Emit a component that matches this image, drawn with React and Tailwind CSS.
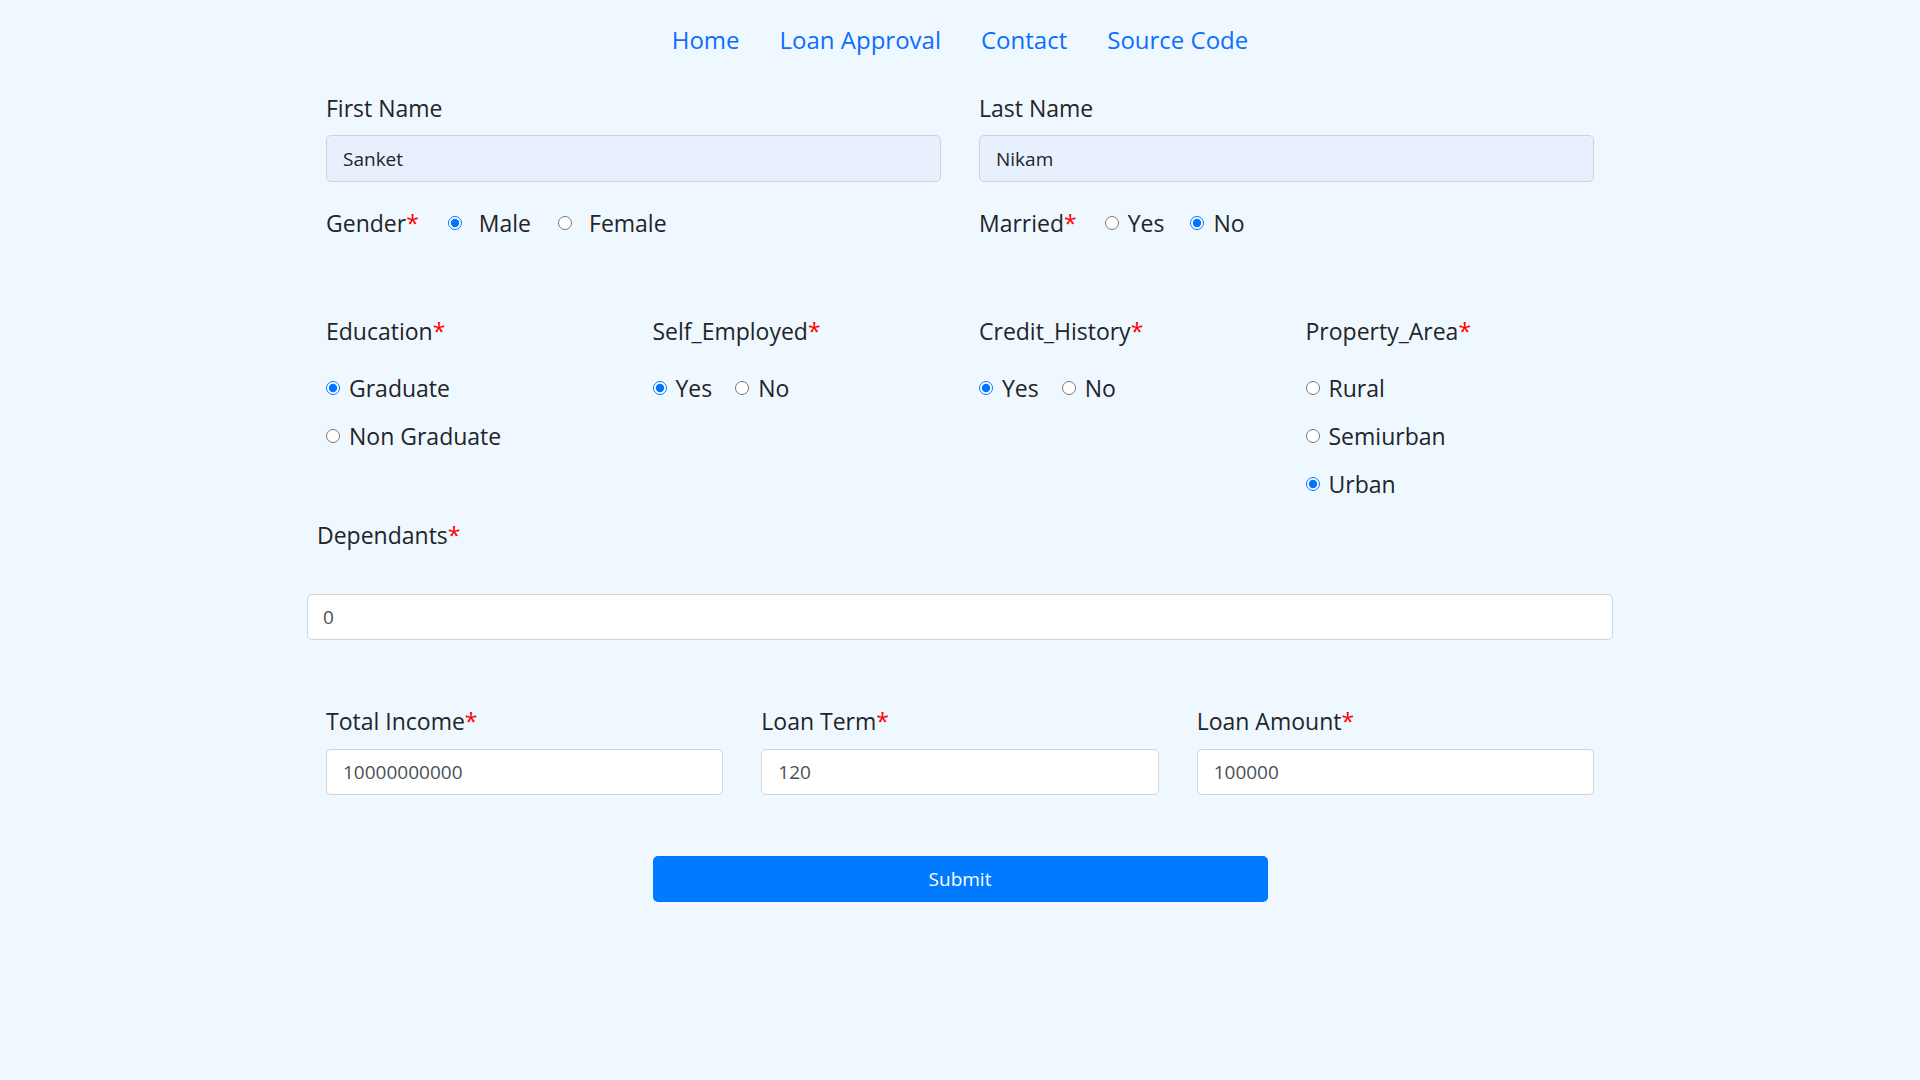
import React from "react";

const Req = () => <span className="text-[#ff0000]">*</span>;

const Radio = ({ name, checked, label, textGap = "ml-[9px]", className = "" }) => (
  <label className={`flex items-center ${className}`}>
    <input
      type="radio"
      name={name}
      defaultChecked={checked}
      className="m-0 h-[14px] w-[14px] shrink-0"
    />
    <span className={textGap}>{label}</span>
  </label>
);

const TextField = ({ label, value, required, autofill = false }) => (
  <div className="px-[19px]">
    <label className="block text-[23px] leading-[36px]">
      {label}
      {required && <Req />}
    </label>
    <input
      defaultValue={value}
      className={`mt-[10px] block h-[46px] w-full rounded-[5px] border border-[#ced4da] px-[16px] text-[19px] outline-none ${
        autofill ? "bg-[#e8f0fe] text-[#212529]" : "bg-white text-[#495057]"
      }`}
    />
  </div>
);

const RadioGroup = ({ title, name, options, inline = false }) => (
  <div className="px-[19px]">
    <div className="text-[23px] leading-[36px]">
      {title}
      <Req />
    </div>
    <div className={`mt-[21px] flex ${inline ? "flex-row" : "flex-col gap-[12px]"} text-[23px] leading-[36px]`}>
      {options.map((o, i) => (
        <Radio
          key={o.label}
          name={name}
          label={o.label}
          checked={o.checked}
          className={inline && i > 0 ? "ml-[23px]" : ""}
        />
      ))}
    </div>
  </div>
);

export default function App() {
  return (
    <div className="min-h-screen bg-[#f0f8ff] font-['Open_Sans',sans-serif] text-[#212529]">
      <nav className="flex h-[80px] items-center justify-center gap-[40px] text-[24px] text-[#0d6efd]">
        <a href="#">Home</a>
        <a href="#">Loan Approval</a>
        <a href="#">Contact</a>
        <a href="#">Source Code</a>
      </nav>

      <form className="mx-auto w-[1306px] pt-[10px]" onSubmit={(e) => e.preventDefault()}>
        <div className="grid grid-cols-2">
          <div className="px-[19px]">
            <label className="block text-[23px] leading-[36px]">First Name</label>
            <input
              defaultValue="Sanket"
              className="mt-[9px] block h-[47px] w-full rounded-[5px] border border-[#ced4da] bg-[#e8f0fe] px-[16px] text-[19px] text-[#212529] outline-none"
            />
            <div className="mt-[23px] flex h-[36px] items-center text-[23px]">
              <span>
                Gender
                <Req />
              </span>
              <Radio name="gender" label="Male" checked textGap="ml-[17px]" className="ml-[29px]" />
              <Radio name="gender" label="Female" textGap="ml-[17px]" className="ml-[27px]" />
            </div>
          </div>
          <div className="px-[19px]">
            <label className="block text-[23px] leading-[36px]">Last Name</label>
            <input
              defaultValue="Nikam"
              className="mt-[9px] block h-[47px] w-full rounded-[5px] border border-[#ced4da] bg-[#e8f0fe] px-[16px] text-[19px] text-[#212529] outline-none"
            />
            <div className="mt-[23px] flex h-[36px] items-center text-[23px]">
              <span>
                Married
                <Req />
              </span>
              <Radio name="married" label="Yes" className="ml-[28px]" />
              <Radio name="married" label="No" checked className="ml-[26px]" />
            </div>
          </div>
        </div>

        <div className="mt-[72px] grid grid-cols-4">
          <RadioGroup
            title="Education"
            name="education"
            options={[{ label: "Graduate", checked: true }, { label: "Non Graduate" }]}
          />
          <RadioGroup
            title="Self_Employed"
            name="self_employed"
            inline
            options={[{ label: "Yes", checked: true }, { label: "No" }]}
          />
          <RadioGroup
            title="Credit_History"
            name="credit_history"
            inline
            options={[{ label: "Yes", checked: true }, { label: "No" }]}
          />
          <RadioGroup
            title="Property_Area"
            name="property_area"
            options={[{ label: "Rural" }, { label: "Semiurban" }, { label: "Urban", checked: true }]}
          />
        </div>

        <div className="mt-[15px]">
          <label className="block pl-[10px] text-[23px] leading-[36px]">
            Dependants
            <Req />
          </label>
          <input
            defaultValue="0"
            className="mt-[41px] block h-[46px] w-full rounded-[5px] border border-[#ced4da] bg-white px-[15px] text-[19px] text-[#495057] outline-none"
          />
        </div>

        <div className="mt-[63px] grid grid-cols-3">
          <TextField label="Total Income" value="10000000000" required />
          <TextField label="Loan Term" value="120" required />
          <TextField label="Loan Amount" value="100000" required />
        </div>

        <div className="mt-[61px] grid grid-cols-4">
          <div className="col-span-2 col-start-2 px-[19px]">
            <button
              type="submit"
              className="h-[46px] w-full rounded-[5px] bg-[#007bff] text-[19px] text-white"
            >
              Submit
            </button>
          </div>
        </div>
      </form>
    </div>
  );
}
